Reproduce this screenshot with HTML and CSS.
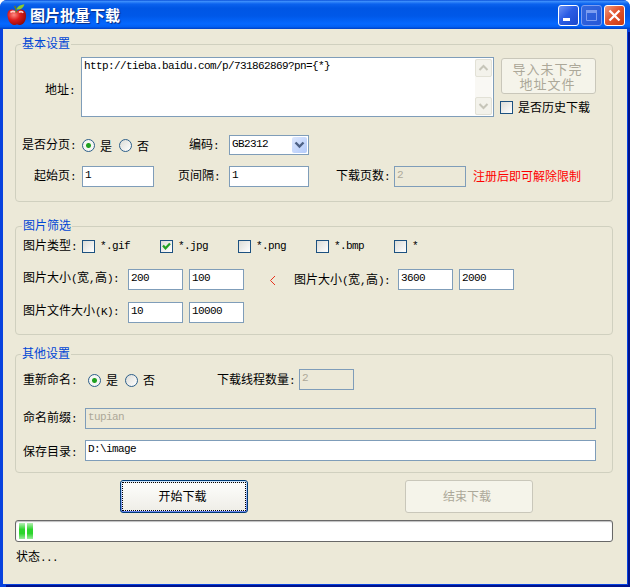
FILE: index.html
```html
<!DOCTYPE html>
<html lang="zh-CN">
<head>
<meta charset="utf-8">
<title>图片批量下载</title>
<link rel="stylesheet" href="styles.css">
</head>
<body>
<div class="window">
  <header class="titlebar">
    <svg class="app-icon" width="20" height="22" viewBox="0 0 20 22">
      <defs>
        <radialGradient id="apple" cx="35%" cy="35%" r="75%">
          <stop offset="0" stop-color="#ff8a80"/><stop offset=".45" stop-color="#dc1c1c"/><stop offset="1" stop-color="#8d0808"/>
        </radialGradient>
      </defs>
      <path d="M9 7C4.500 3.500-.5 6 .5 12c.7 5 3.200 8.500 6.500 9 1.500.3 2-.5 3-.5s2 .8 3.500.5c3.500-.8 5.300-4.500 5.500-8.500C19.500 6 14.500 3.500 10 7z" fill="url(#apple)"/>
      <path d="M3.500 8.500c1-1.500 3.500-1.500 4.500-.3M12 8.500c1-1.200 3.200-1.200 4.200.3" stroke="#ffd0c8" stroke-width="1.600" fill="none"/>
      <path d="M9.500 8.500C9.500 6 9 4 7.500 2" stroke="#6a7a20" stroke-width="1.500" fill="none"/>
      <path d="M9.500 5.500C11 1.500 14 1 17.500.3 16.500 4 13.500 6 9.500 5.500z" fill="#8ccb2c"/>
    </svg>
    <h1 class="title">图片批量下载</h1>
    <div class="controls">
      <span class="ctl"><svg width="19" height="19"><path d="M4 12h7v3H4z" fill="#fff"/></svg></span>
      <span class="ctl ctl-off"><svg width="19" height="19"><path d="M4 4h11v3H4z" fill="#7d9df0"/><path d="M4.500 4.500h10v10h-10z" fill="none" stroke="#7d9df0"/></svg></span>
      <span class="ctl ctl-close"><svg width="19" height="19"><path d="M4.500 4.500l10 10M14.500 4.500l-10 10" stroke="#fff" stroke-width="2.300"/></svg></span>
    </div>
  </header>

  <main class="client">
    <section class="group basic">
      <h2 class="legend">基本设置</h2>
      <div class="row row-url">
        <span class="label">地址<i>:</i></span>
        <div class="textarea">
          <span class="mono">http://tieba.baidu.com/p/731862869?pn={*}</span>
          <div class="scrollbar">
            <span class="arrow"><svg width="15" height="16"><path d="M3.500 10l4-4 4 4" fill="none" stroke="#c6c5b9" stroke-width="2"/></svg></span>
            <span class="arrow"><svg width="15" height="16"><path d="M3.500 6l4 4 4-4" fill="none" stroke="#c6c5b9" stroke-width="2"/></svg></span>
          </div>
        </div>
        <div class="url-side">
          <div class="button disabled import"><span>导入未下完</span><span>地址文件</span></div>
          <div class="choice"><span class="check"></span><span>是否历史下载</span></div>
        </div>
      </div>
      <div class="row row-paging">
        <span class="label">是否分页<i>:</i></span>
        <div class="choice yes"><span class="radio on"></span><span>是</span></div>
        <div class="choice no"><span class="radio"></span><span>否</span></div>
        <span class="label">编码<i>:</i></span>
        <div class="select"><span class="mono">GB2312</span>
          <span class="drop"><svg width="15" height="16"><path d="M3.500 5.500l4 4 4-4" fill="none" stroke="#4d6185" stroke-width="2.400"/></svg></span>
        </div>
      </div>
      <div class="row row-pages">
        <span class="label">起始页<i>:</i></span>
        <div class="input mono">1</div>
        <span class="label interval">页间隔<i>:</i></span>
        <div class="input mono">1</div>
        <span class="label count">下载页数<i>:</i></span>
        <div class="input off mono">2</div>
        <span class="notice">注册后即可解除限制</span>
      </div>
    </section>

    <section class="group filter">
      <h2 class="legend">图片筛选</h2>
      <div class="row row-types">
        <span class="label">图片类型<i>:</i></span>
        <div class="choice"><span class="check"></span><span class="mono">*.gif</span></div>
        <div class="choice"><span class="check"><svg width="11" height="11"><path d="M2 4.500l2.500 2.800L9 2.500" fill="none" stroke="#21a121" stroke-width="2.200"/></svg></span><span class="mono">*.jpg</span></div>
        <div class="choice"><span class="check"></span><span class="mono">*.png</span></div>
        <div class="choice"><span class="check"></span><span class="mono">*.bmp</span></div>
        <div class="choice"><span class="check"></span><span class="mono">*</span></div>
      </div>
      <div class="row row-size">
        <span class="label">图片大小<i>(</i>宽<i>,</i>高<i>):</i></span>
        <div class="input mono">200</div>
        <div class="input mono">100</div>
        <span class="less"><svg width="7" height="11"><path d="M6 1L1.500 5.500 6 10" fill="none" stroke="#e8321c"/></svg></span>
        <span class="label lower">图片大小<i>(</i>宽<i>,</i>高<i>):</i></span>
        <div class="input mono">3600</div>
        <div class="input mono">2000</div>
      </div>
      <div class="row row-size">
        <span class="label">图片文件大小<i>(K):</i></span>
        <div class="input mono">10</div>
        <div class="input mono">10000</div>
      </div>
    </section>

    <section class="group other">
      <h2 class="legend">其他设置</h2>
      <div class="row row-rename">
        <span class="label">重新命名<i>:</i></span>
        <div class="choice"><span class="radio on"></span><span>是</span></div>
        <div class="choice"><span class="radio"></span><span>否</span></div>
        <span class="label">下载线程数量<i>:</i></span>
        <div class="input off mono">2</div>
      </div>
      <div class="row row-wide">
        <span class="label">命名前缀<i>:</i></span>
        <div class="input off mono">tupian</div>
      </div>
      <div class="row row-wide row-dir">
        <span class="label">保存目录<i>:</i></span>
        <div class="input mono">D:\image</div>
      </div>
    </section>

    <div class="actions">
      <div class="button primary"><span>开始下载</span></div>
      <div class="button disabled stop">结束下载</div>
    </div>
    <div class="progress"><span class="chunk"></span><span class="chunk"></span></div>
    <p class="status">状态<i>...</i></p>
  </main>
</div>
</body>
</html>
```
FILE: styles.css
```css
* { box-sizing: border-box; }
body {
  margin: 0;
  background: #fff;
  font: 12px/14px "Noto Sans CJK SC", sans-serif;
  color: #000;
  overflow: hidden;
}
svg { display: block; }
.window {
  width: 630px;
  height: 587px;
  display: flex;
  flex-direction: column;
  background: #0842de;
  border-radius: 7px 7px 0 0;
  overflow: hidden;
}

/* Title bar */
.titlebar {
  height: 29px;
  flex: none;
  display: flex;
  align-items: center;
  padding: 2px 5px 0 7px;
  background: linear-gradient(#0a4fd8 0, #3b8dfb 5%, #0b62ee 14%, #0056e4 28%, #0058e8 55%, #0568ff 82%, #0260f4 92%, #0040c4 100%);
}
.app-icon { flex: none; margin-top: -1px; }
.title {
  margin: -1px auto 0 3px;
  font-size: 15px;
  line-height: 20px;
  font-weight: 700;
  color: #fff;
  text-shadow: 1px 1px 1px #0a2a80;
}
.controls { display: flex; gap: 2px; }
.ctl {
  width: 21px;
  height: 21px;
  border: 1px solid #fff;
  border-radius: 3px;
  background: linear-gradient(135deg, #6d93f5, #2a5ce4 45%, #1a48cd);
}
.ctl-off { border-color: #7d9df0; background: linear-gradient(135deg, #3468dd, #2657d8); }
.ctl-close { background: linear-gradient(135deg, #f09b80, #e2552f 45%, #c93a10); }

/* Client area */
.client {
  flex: 1;
  margin: 0 3px 3px;
  padding: 15px 14px 0 12px;
  background: #ece9d8;
  box-shadow: 1px 1px 0 #0842de, 3px 3px 0 #00138c;
}
.group {
  position: relative;
  border: 1px solid #d0d0bf;
  border-radius: 4px;
}
.basic { height: 158px; padding-top: 12px; }
.filter { height: 109px; margin-top: 24px; padding-top: 11px; }
.other { height: 119px; margin-top: 19px; padding-top: 14px; }
.legend {
  position: absolute;
  top: -9px;
  left: 5px;
  margin: 0;
  padding: 0 1px;
  font-size: 12px;
  line-height: 14px;
  font-weight: 400;
  color: #0046d5;
  background: #ece9d8;
}
.filter .legend { left: 6px; }
i, .mono {
  font-family: "Liberation Mono", monospace;
  font-size: 11px;
  letter-spacing: -0.6px;
  font-style: normal;
}
.row { display: grid; align-items: center; justify-content: start; }
.label, .notice { white-space: nowrap; }
.notice { color: #f00; }

/* Fields */
.input {
  height: 21px;
  padding: 1px 2px 0;
  border: 1px solid #7f9db9;
  background: #fff;
}
.off { background: transparent; color: #aca899; }
.textarea {
  height: 60px;
  display: flex;
  justify-content: space-between;
  padding: 1px 1px 1px 2px;
  border: 1px solid #7f9db9;
  background: #fff;
}
.scrollbar {
  width: 17px;
  display: flex;
  flex-direction: column;
  justify-content: space-between;
  background: #f9f8f4;
}
.arrow {
  height: 18px;
  border: 1px solid #e2e1d6;
  border-radius: 2px;
  background: #f3f2eb;
}
.select {
  height: 20px;
  display: flex;
  justify-content: space-between;
  padding: 1px 1px 1px 2px;
  border: 1px solid #7f9db9;
  background: #fff;
}
.drop {
  width: 15px;
  height: 16px;
  border-radius: 2px;
  background: linear-gradient(135deg, #dce7fd, #b3cafa);
}
.choice { display: flex; align-items: center; gap: 5px; white-space: nowrap; }
.check {
  width: 13px;
  height: 13px;
  border: 1px solid #1c5180;
  background: linear-gradient(135deg, #dcdcd7, #fff);
}
.radio {
  width: 13px;
  height: 13px;
  border: 1px solid #2c5f8a;
  border-radius: 50%;
  background: linear-gradient(135deg, #dcdcd7, #fff);
}
.radio.on { background: radial-gradient(circle, #21a121 0 2px, #f6f6f3 3px); }

/* Basic settings rows */
.row-url { grid-template-columns: 36px 413px 102px; padding-left: 29px; align-items: start; }
.row-url > .label { padding-top: 25px; }
.url-side { padding: 1px 0 0 7px; }
.url-side .choice { margin: 7px 0 0 -1px; }
.url-side .choice span + span { margin-top: -1px; }
.row-paging { grid-template-columns: 59px 37px 71px 39px 80px; height: 21px; margin-top: 17px; padding-left: 7px; }
.row-paging .yes, .row-paging .no { padding-top: 2px; }
.row-paging .label { margin-left: -1px; }
.row-pages { grid-template-columns: 48px 72px 75px 80px 85px 72px auto; height: 21px; margin-top: 11px; padding-left: 18px; }
.row-pages .label, .row-pages .notice { margin-top: -1px; }
.interval { padding-left: 24px; }
.count { padding-left: 27px; }
.row-pages .notice { margin-left: 7px; }

/* Filter rows */
.row-types { grid-template-columns: 59px repeat(5, 78px); height: 14px; padding-left: 7px; }
.row-types .choice .mono { margin-top: -1px; }
.row-size { grid-template-columns: 105px 55px 61px 50px 104px 55px 61px; height: 21px; margin-top: 17px; padding-left: 7px; }
.row-size + .row-size { margin-top: 12px; }
.row-size .input + .input { margin-left: 6px; }
.row-size > .label { margin-top: -3px; }
.row-size .less { margin: 1px 0 0 25px; }
.row-size .lower { margin-top: 1px; }

/* Other rows */
.row-rename { grid-template-columns: 65px 37px 92px 82px 55px; height: 21px; padding-left: 7px; }
.row-rename .choice { padding-top: 1px; }
.row-wide { grid-template-columns: 62px 511px; height: 21px; margin-top: 18px; padding-left: 7px; }
.row-wide .label { margin-top: -1px; }
.row-dir { margin-top: 11px; }
.row-dir .label { padding-top: 4px; }

/* Buttons */
.button {
  display: flex;
  align-items: center;
  justify-content: center;
  text-align: center;
  border-radius: 3px;
}
.disabled { border: 1px solid #c9c7ba; background: #f5f4ea; color: #aca899; }
.stop { padding: 0 4px 2px 0; }
.import {
  height: 36px;
  flex-direction: column;
  padding: 0 2px 1px 0;
  font-size: 13px;
  line-height: 15px;
  letter-spacing: 1px;
}
.actions { display: flex; gap: 157px; margin-top: 7px; padding-left: 105px; }
.actions .button { width: 128px; height: 33px; }
.primary {
  padding: 1px;
  border: 1px solid #003c74;
  background: linear-gradient(#cee7ff, #6982ee);
}
.primary span {
  flex: 1;
  height: 29px;
  padding-right: 3px;
  line-height: 25px;
  border: 1px dotted #000;
  background: linear-gradient(#fdfdfb, #efeee8);
}

.progress {
  height: 22px;
  display: flex;
  gap: 2px;
  margin-top: 7px;
  padding: 2px 3px;
  border: 1px solid #686868;
  border-radius: 3px;
  background: #fff;
  box-shadow: inset 0 1px 1px #bebebe;
}
.chunk { width: 6px; height: 16px; background: linear-gradient(#b4f0b4, #2cd52c 40%, #2cd52c 65%, #9aec9a); }
.status { margin: 7px 0 0 1px; }
```
